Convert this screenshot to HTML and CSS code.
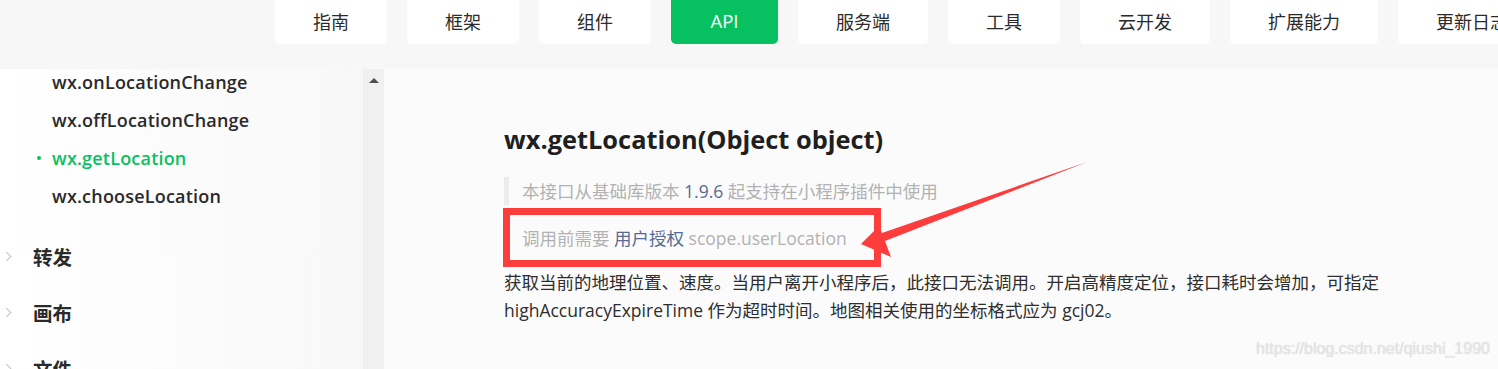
FILE: index.html
```html
<!DOCTYPE html>
<html lang="zh-CN">
<head>
<meta charset="utf-8">
<title>wx.getLocation</title>
<link rel="stylesheet" href="styles.css">
</head>
<body>
<div class="page">
  <header class="topbar">
    <nav class="tabs">
      <a class="tab">指南</a>
      <a class="tab">框架</a>
      <a class="tab">组件</a>
      <a class="tab active">API</a>
      <a class="tab">服务端</a>
      <a class="tab">工具</a>
      <a class="tab">云开发</a>
      <a class="tab">扩展能力</a>
      <a class="tab">更新日志</a>
    </nav>
  </header>
  <div class="body">
    <aside class="sidebar">
      <div class="side-scroll">
        <ul class="sub-list">
          <li class="sub-item">wx.onLocationChange</li>
          <li class="sub-item">wx.offLocationChange</li>
          <li class="sub-item current">wx.getLocation</li>
          <li class="sub-item">wx.chooseLocation</li>
        </ul>
        <ul class="cat-list">
          <li class="cat"><span class="chev"></span>转发</li>
          <li class="cat"><span class="chev"></span>画布</li>
          <li class="cat"><span class="chev"></span>文件</li>
        </ul>
      </div>
      <div class="scrollbar"><span class="scroll-up"></span></div>
    </aside>
    <main class="content">
      <h1 class="title">wx.getLocation(Object object)</h1>
      <blockquote class="note first">本接口从基础库版本 <a class="link">1.9.6</a> 起支持在小程序插件中使用</blockquote>
      <blockquote class="note second">调用前需要 <a class="link">用户授权</a> scope.userLocation</blockquote>
      <p class="desc">获取当前的地理位置、速度。当用户离开小程序后，此接口无法调用。开启高精度定位，接口耗时会增加，可指定 highAccuracyExpireTime 作为超时时间。地图相关使用的坐标格式应为 gcj02。</p>
      <div class="red-box"></div>
    </main>
  </div>
  <svg class="arrow" width="1498" height="369" viewBox="0 0 1498 369">
    <polygon points="861,244 879,226 882,233 1087,162 885,241 891,257" fill="#fd3c3c"/>
  </svg>
  <div class="watermark">https://blog.csdn.net/qiushi_1990</div>
</div>
</body>
</html>
```
FILE: styles.css
```css
* { box-sizing: border-box; }
html, body { margin: 0; padding: 0; }
body {
  width: 1498px;
  height: 369px;
  overflow: hidden;
  font-family: "Open Sans", "Noto Sans CJK SC", sans-serif;
  color: #333;
  background: #fafafa;
}
.page { position: relative; width: 1498px; height: 369px; overflow: hidden; }

.topbar {
  height: 69px;
  background: #f7f7f7;
  padding-left: 275px;
}
.tabs { display: flex; gap: 20px; white-space: nowrap; }
.tab {
  display: block;
  flex: none;
  height: 44px;
  line-height: 42px;
  padding: 0 38px;
  background: #fff;
  border-radius: 0 0 5px 5px;
  font-size: 18px;
  color: #2b2b2b;
  font-family: "Noto Sans CJK SC", sans-serif;
}
.tab.active {
  background: #07c160;
  color: #fff;
  font-family: "Open Sans", sans-serif;
  font-size: 18.5px;
  padding: 0 39.5px;
}

.body { display: flex; height: 300px; }
.sidebar {
  width: 384px;
  display: flex;
  background: linear-gradient(90deg, #ffffff 0%, #f7f7f7 100%);
}
.side-scroll { flex: 1; overflow: hidden; }
.sub-list { list-style: none; margin: -6px 0 0; padding: 0; }
.sub-item {
  position: relative;
  height: 38px;
  line-height: 38px;
  padding-left: 52px;
  font-size: 18px;
  font-weight: 600;
  color: #2a2a2a;
  letter-spacing: 0.2px;
}
.sub-item.current { color: #07c160; }
.sub-item.current::before {
  content: "";
  position: absolute;
  left: 37px;
  top: 17px;
  width: 4px;
  height: 4px;
  border-radius: 50%;
  background: #07c160;
}
.cat-list { list-style: none; margin: 14px 0 0; padding: 0; }
.cat {
  position: relative;
  height: 56px;
  line-height: 56px;
  padding-left: 33px;
  font-size: 19.5px;
  font-weight: 700;
  color: #2a2a2a;
  font-family: "Noto Sans CJK SC", sans-serif;
}
.chev {
  position: absolute;
  left: 3px;
  top: 24px;
  width: 7px;
  height: 7px;
  border-top: 1.5px solid #c4c4c4;
  border-right: 1.5px solid #c4c4c4;
  transform: rotate(45deg);
}
.scrollbar {
  width: 21px;
  background: #f0f0f0;
  position: relative;
}
.scroll-up {
  position: absolute;
  left: 6px;
  top: 9px;
  width: 0;
  height: 0;
  border-left: 5px solid transparent;
  border-right: 5px solid transparent;
  border-bottom: 5px solid #505050;
}

.content {
  flex: 1;
  position: relative;
  padding: 52px 0 0 120px;
  background: #fbfbfb;
}
.title {
  margin: 0;
  font-size: 25.4px;
  line-height: 36px;
  font-weight: 700;
  color: #1f1f1f;
}
.note {
  margin: 0;
  border-left: 5px solid #ececec;
  padding-left: 13px;
  font-size: 17.5px;
  line-height: 28px;
  color: #b2b2b2;
}
.note.first { margin-top: 20px; }
.note.second { margin-top: 19px; }
.link { color: #576b95; }
.desc {
  margin: 16px 0 0;
  width: 900px;
  font-size: 17.5px;
  line-height: 28px;
  color: #2e2e2e;
}
.red-box {
  position: absolute;
  left: 119px;
  top: 139px;
  width: 378px;
  height: 59px;
  border: 7px solid #fd3c3c;
}
.arrow { position: absolute; left: 0; top: 0; pointer-events: none; }
.watermark {
  position: absolute;
  left: 1256px;
  top: 340px;
  font-family: "Liberation Sans", sans-serif;
  font-size: 16px;
  color: #e6e6e6;
  text-shadow: 0 0 1px #d0d0d0;
}
```
